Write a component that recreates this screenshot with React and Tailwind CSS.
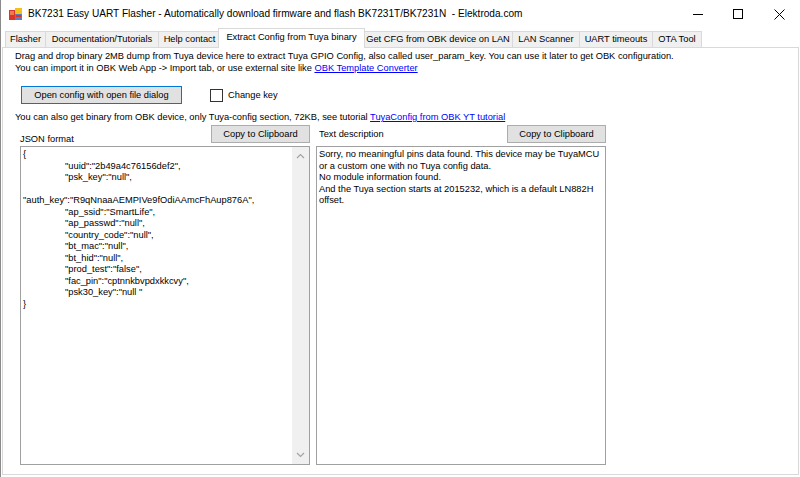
import React from "react";

const TABS = [
  { label: "Flasher", w: "w-[40px]" },
  { label: "Documentation/Tutorials", w: "w-[113px]" },
  { label: "Help contact", w: "w-[62px]" },
  { label: "Extract Config from Tuya binary", w: "w-[147px]", active: true },
  { label: "Get CFG from OBK device on LAN", w: "w-[149px]" },
  { label: "LAN Scanner", w: "w-[67px]" },
  { label: "UART timeouts", w: "w-[73px]" },
  { label: "OTA Tool", w: "w-[50px]" },
];

const JSON_LINES = [
  { t: "{", indent: false },
  { t: '"uuid":"2b49a4c76156def2",', indent: true },
  { t: '"psk_key":"null",', indent: true },
  { t: "\u00a0", indent: false },
  { t: '"auth_key":"R9qNnaaAEMPIVe9fOdiAAmcFhAup876A",', indent: false },
  { t: '"ap_ssid":"SmartLife",', indent: true },
  { t: '"ap_passwd":"null",', indent: true },
  { t: '"country_code":"null",', indent: true },
  { t: '"bt_mac":"null",', indent: true },
  { t: '"bt_hid":"null",', indent: true },
  { t: '"prod_test":"false",', indent: true },
  { t: '"fac_pin":"cptnnkbvpdxkkcvy",', indent: true },
  { t: '"psk30_key":"null "', indent: true },
  { t: "}", indent: false },
];

function AppIcon() {
  return (
    <svg width="13" height="12" viewBox="0 0 13 12" className="shrink-0">
      <rect x="0" y="2" width="6" height="10" fill="#d9352b" />
      <rect x="6" y="0" width="7" height="6" fill="#f2c21b" />
      <rect x="6" y="6" width="7" height="6" fill="#5b7fc7" />
      <rect x="1" y="3" width="4" height="4" fill="#f07a4a" />
      <rect x="7" y="7" width="5" height="2" fill="#d9352b" />
    </svg>
  );
}

function WinButton({ children, blue }) {
  return (
    <div
      className={`flex items-center justify-center bg-[#e1e1e1] border ${
        blue ? "border-[#0078d7]" : "border-[#adadad]"
      }`}
    >
      {children}
    </div>
  );
}

function Chevron({ up }) {
  return (
    <svg width="9" height="6" viewBox="0 0 9 6">
      <path
        d={up ? "M1 5 L4.5 1.5 L8 5" : "M1 1 L4.5 4.5 L8 1"}
        fill="none"
        stroke="#a3a3a3"
        strokeWidth="1.2"
      />
    </svg>
  );
}

export default function App() {
  return (
    <div className="w-[800px] h-[477px] bg-white flex flex-col overflow-hidden text-black font-['Liberation_Sans',Arial,sans-serif] border-l border-[#8a8a8a]">
      {/* title bar */}
      <div className="h-[28px] flex items-center shrink-0">
        <div className="pl-[8px] pr-[6px] flex items-center">
          <AppIcon />
        </div>
        <span className="text-[10.1px] whitespace-pre">
          BK7231 Easy UART Flasher - Automatically download firmware and flash BK7231T/BK7231N  - Elektroda.com
        </span>
        <div className="flex-1" />
        <div className="flex items-center h-full">
          <div className="w-[40px] h-full flex items-center justify-center">
            <svg width="10" height="10" viewBox="0 0 10 10">
              <path d="M0 5.5 H10" stroke="#000" strokeWidth="1" />
            </svg>
          </div>
          <div className="w-[40px] h-full flex items-center justify-center">
            <svg width="10" height="10" viewBox="0 0 10 10">
              <rect x="0.5" y="0.5" width="9" height="9" fill="none" stroke="#000" strokeWidth="1" />
            </svg>
          </div>
          <div className="w-[42px] h-full flex items-center justify-center">
            <svg width="11" height="11" viewBox="0 0 11 11">
              <path d="M0.5 0.5 L10.5 10.5 M10.5 0.5 L0.5 10.5" stroke="#000" strokeWidth="1" />
            </svg>
          </div>
        </div>
      </div>

      {/* tab strip */}
      <div className="h-[19px] flex items-end pl-[4px] shrink-0 text-[9.3px]">
        {TABS.map((tab, i) =>
          tab.active ? (
            <div
              key={i}
              className={`${tab.w} h-[20px] -mx-[2px] -mb-[1px] relative z-10 bg-white border border-b-0 border-[#d9d9d9] flex items-center justify-center pb-[2px]`}
            >
              {tab.label}
            </div>
          ) : (
            <div
              key={i}
              className={`${tab.w} h-[16px] bg-[#f0f0f0] border-t border-l border-[#d9d9d9] ${
                i === TABS.length - 1 ? "border-r" : ""
              } flex items-center justify-center`}
            >
              {tab.label}
            </div>
          )
        )}
      </div>

      {/* tab page */}
      <div className="flex-1 ml-[1px] mr-[1px] mb-[2px] bg-white border border-[#d9d9d9] flex flex-col pl-[12px] pt-[2px] text-[9.3px] leading-[12px]">
        <p>
          Drag and drop binary 2MB dump from Tuya device here to extract Tuya GPIO Config, also called user_param_key. You can use it later to get OBK configuration.
        </p>
        <p>
          You can import it in OBK Web App -&gt; Import tab, or use external site like{" "}
          <span className="text-[#0000ff] underline">OBK Template Converter</span>
        </p>

        <div className="flex items-center mt-[12px] ml-[6px]">
          <div className="w-[161px] h-[18px]">
            <WinButton blue>
              <span className="h-[16px] flex items-center">Open config with open file dialog</span>
            </WinButton>
          </div>
          <div className="ml-[28px] w-[13px] h-[13px] border border-[#333] bg-white" />
          <span className="ml-[5px]">Change key</span>
        </div>

        <p className="mt-[7px]">
          You can also get binary from OBK device, only Tuya-config section, 72KB, see tutorial{" "}
          <span className="text-[#0000ff] underline">TuyaConfig from OBK YT tutorial</span>
        </p>

        <div className="flex gap-[6px] ml-[5px] mt-[2px]">
          {/* JSON column */}
          <div className="w-[290px] flex flex-col">
            <div className="h-[18px] flex items-end justify-between">
              <span className="mb-[-2px]">JSON format</span>
              <div className="w-[99px] h-[18px]">
                <WinButton>
                  <span className="h-[16px] flex items-center">Copy to Clipboard</span>
                </WinButton>
              </div>
            </div>
            <div className="mt-[3px] h-[319px] border border-[#a0a0a0] flex">
              <div className="flex-1 pl-[2px] pt-[2px] leading-[11.5px]">
                {JSON_LINES.map((l, i) => (
                  <div key={i} className={l.indent ? "pl-[42px]" : ""}>
                    {l.t}
                  </div>
                ))}
              </div>
              <div className="w-[17px] bg-[#f0f0f0] flex flex-col items-center justify-between py-[6px]">
                <Chevron up />
                <Chevron />
              </div>
            </div>
          </div>

          {/* Text description column */}
          <div className="w-[290px] flex flex-col">
            <div className="h-[18px] flex items-center justify-between">
              <span className="ml-[3px]">Text description</span>
              <div className="w-[99px] h-[18px]">
                <WinButton>
                  <span className="h-[16px] flex items-center">Copy to Clipboard</span>
                </WinButton>
              </div>
            </div>
            <div className="mt-[3px] h-[319px] border border-[#a0a0a0] pl-[2px] pt-[2px] leading-[11.5px]">
              <div>Sorry, no meaningful pins data found. This device may be TuyaMCU</div>
              <div>or a custom one with no Tuya config data.</div>
              <div>No module information found.</div>
              <div>And the Tuya section starts at 2015232, which is a default LN882H</div>
              <div>offset.</div>
            </div>
          </div>
        </div>
      </div>
    </div>
  );
}
